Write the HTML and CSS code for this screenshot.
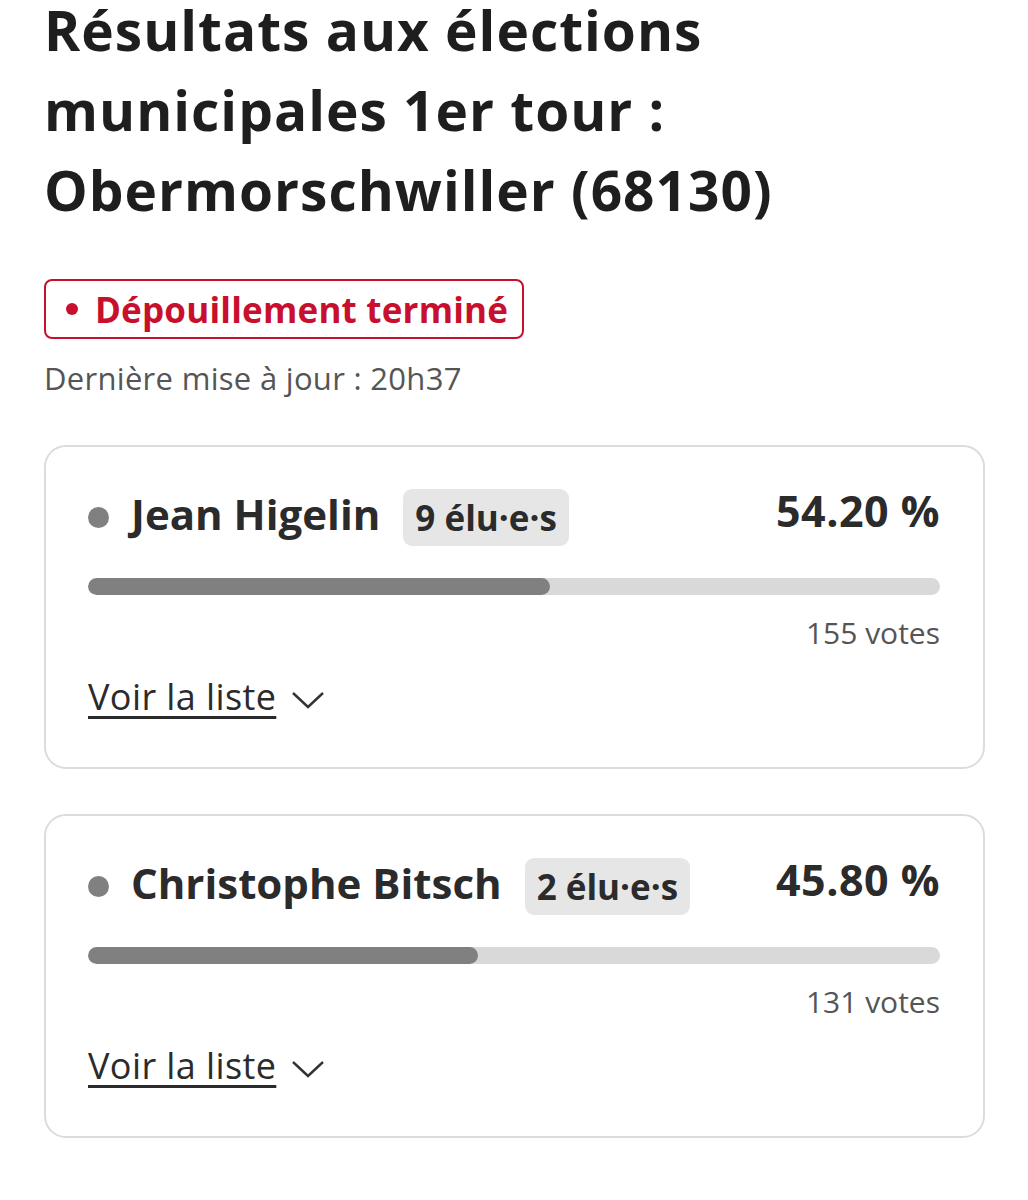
FILE: index.html
```html
<!DOCTYPE html>
<html lang="fr">
<head>
<meta charset="utf-8">
<title>Résultats</title>
<link rel="stylesheet" href="styles.css">
</head>
<body>
<main class="page">
  <h1 class="title">Résultats aux élections municipales 1er tour : Obermorschwiller (68130)</h1>
  <div class="status"><span class="status-dot"></span>Dépouillement terminé</div>
  <p class="updated">Dernière mise à jour : 20h37</p>

  <section class="card">
    <div class="card-head">
      <span class="dot"></span>
      <span class="name">Jean Higelin</span>
      <span class="elus">9 élu·e·s</span>
      <span class="pct">54.20 %</span>
    </div>
    <div class="bar"><div class="bar-fill" style="width:54.2%"></div></div>
    <div class="votes">155 votes</div>
    <a class="more" href="#"><span class="more-text">Voir la liste</span><svg class="chev" width="36" height="22" viewBox="0 0 36 22"><polyline points="3,4 18,18 33,4" fill="none" stroke="#333" stroke-width="2.4"/></svg></a>
  </section>

  <section class="card">
    <div class="card-head">
      <span class="dot"></span>
      <span class="name">Christophe Bitsch</span>
      <span class="elus">2 élu·e·s</span>
      <span class="pct">45.80 %</span>
    </div>
    <div class="bar"><div class="bar-fill" style="width:45.8%"></div></div>
    <div class="votes">131 votes</div>
    <a class="more" href="#"><span class="more-text">Voir la liste</span><svg class="chev" width="36" height="22" viewBox="0 0 36 22"><polyline points="3,4 18,18 33,4" fill="none" stroke="#333" stroke-width="2.4"/></svg></a>
  </section>
</main>
</body>
</html>
```

FILE: styles.css
```css
* { box-sizing: border-box; }
html, body { margin: 0; padding: 0; background: #fff; }
body {
  font-family: "Open Sans", Lato, "DejaVu Sans", sans-serif;
  color: #222;
}
.page {
  padding: 0 43px 0 44px;
}
.title {
  margin: -10px 0 0;
  max-width: 800px;
  font-size: 55px;
  line-height: 80px;
  font-weight: 700;
  color: #1e1e1e;
  letter-spacing: 1px;
}
.status {
  margin-top: 49px;
  display: inline-flex;
  align-items: center;
  height: 60px;
  padding: 0 14px 0 20px;
  border: 2px solid #c8102e;
  border-radius: 8px;
  color: #c8102e;
  font-size: 35px;
  font-weight: 700;
  letter-spacing: 0.2px;
}
.status-dot {
  width: 12px;
  height: 12px;
  border-radius: 50%;
  background: #c8102e;
  margin-right: 17px;
}
.updated {
  margin: 21px 0 0;
  font-size: 31px;
  line-height: 36px;
  letter-spacing: 0.3px;
  color: #555;
}
.card {
  margin-top: 49px;
  border: 2px solid #dcdcdc;
  border-radius: 22px;
  padding: 42px 43px 50px 42px;
}
.card + .card { margin-top: 45px; }
.card-head {
  display: flex;
  align-items: center;
  height: 57px;
}
.dot {
  width: 21px;
  height: 21px;
  border-radius: 50%;
  background: #808080;
  margin-right: 22px;
}
.name {
  font-size: 42px;
  font-weight: 700;
  color: #2b2b2b;
  margin-right: 23px;
  margin-top: -8px;
}
.elus {
  display: inline-flex;
  align-items: center;
  height: 57px;
  padding: 0 12px;
  background: #e6e6e6;
  border-radius: 9px;
  font-size: 35px;
  font-weight: 700;
  color: #2b2b2b;
}
.pct {
  margin-left: auto;
  align-self: flex-start;
  line-height: 44px;
  font-size: 43px;
  letter-spacing: 0.5px;
  font-weight: 700;
  color: #2b2b2b;
}
.bar {
  margin-top: 32px;
  height: 17px;
  border-radius: 9px;
  background: #d9d9d9;
  overflow: hidden;
}
.bar-fill {
  height: 100%;
  background: #808080;
  border-radius: 9px;
}
.votes {
  margin-top: 21px;
  text-align: right;
  font-size: 30px;
  line-height: 34px;
  color: #555;
}
.more {
  margin-top: 27px;
  display: inline-flex;
  align-items: center;
  height: 40px;
  color: #2b2b2b;
  text-decoration: none;
}
.more-text {
  font-size: 36px;
  line-height: 40px;
  letter-spacing: 0.4px;
  text-decoration: underline;
  text-decoration-thickness: 3px;
  text-underline-offset: 6px;
}
.chev {
  margin-left: 14px;
  margin-top: 6px;
}
```
